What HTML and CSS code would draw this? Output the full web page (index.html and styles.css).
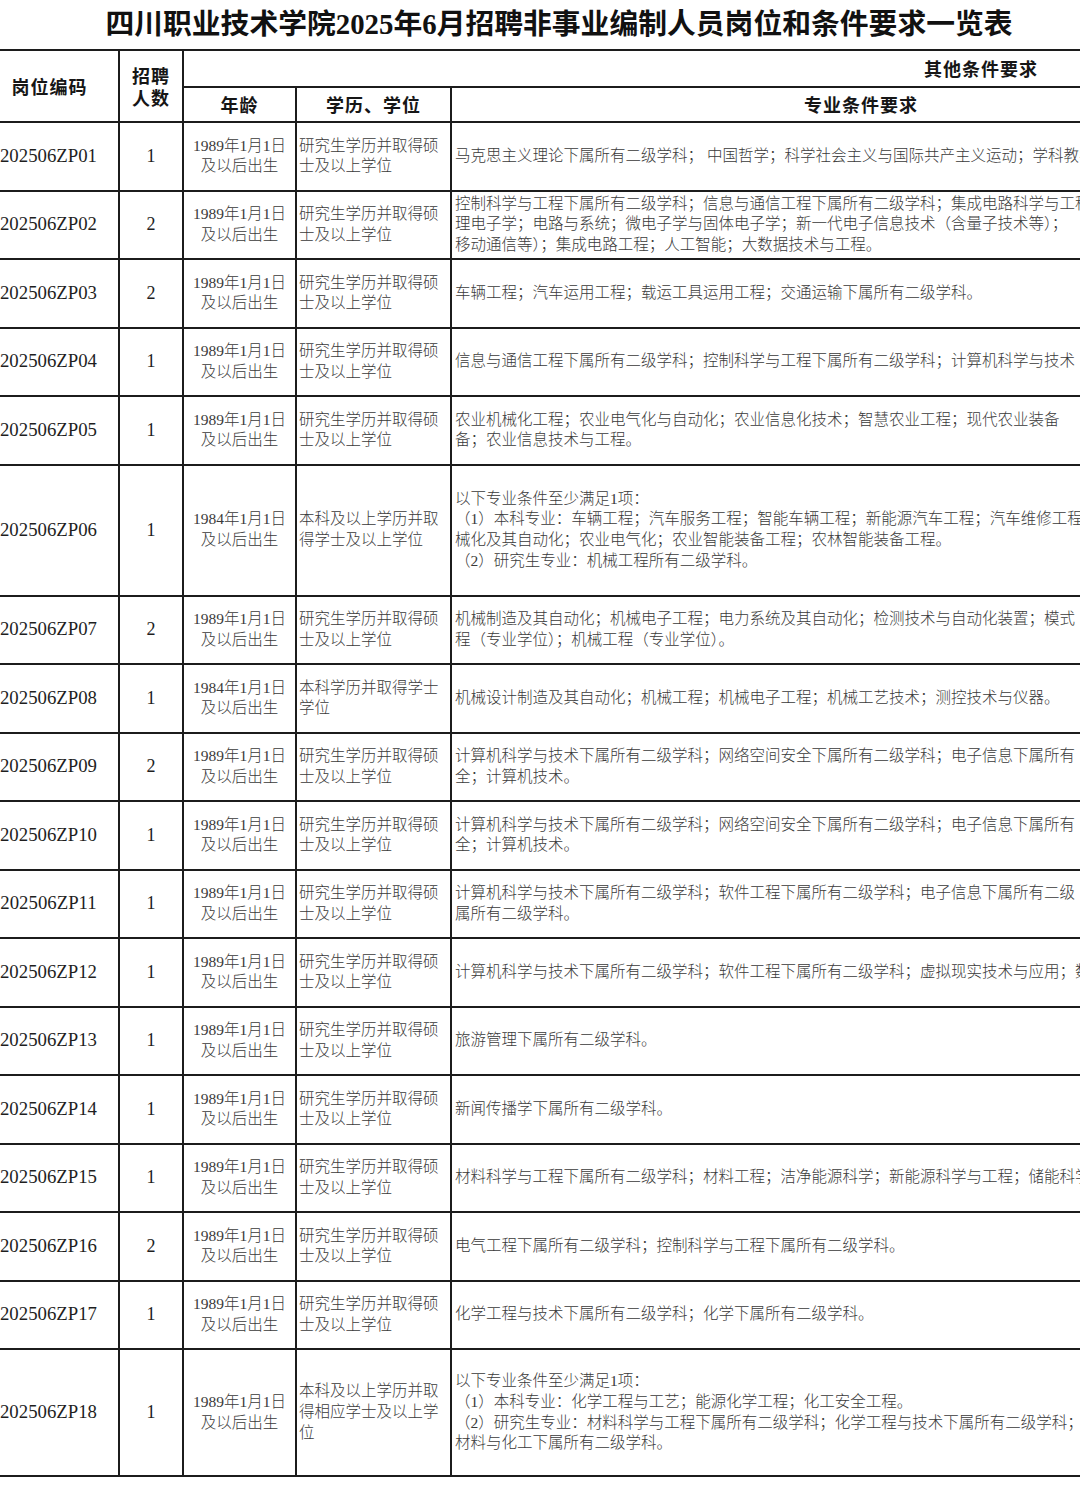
FILE: index.html
```html
<!DOCTYPE html>
<html lang="zh-CN">
<head>
<meta charset="utf-8">
<title>四川职业技术学院2025年6月招聘非事业编制人员岗位和条件要求一览表</title>
<link rel="stylesheet" href="styles.css">
</head>
<body>
<div class="page">
  <h1 class="title">四川职业技术学院<span class="num">2025</span>年<span class="num">6</span>月招聘非事业编制人员岗位和条件要求一览表</h1>
  <div class="sheet">
    <table class="grid">
      <colgroup>
        <col class="c-code"><col class="c-cnt"><col class="c-age"><col class="c-edu"><col class="c-major"><col class="c-other">
      </colgroup>
      <thead>
        <tr class="hd1">
          <th rowspan="2" class="h-code">岗位编码</th>
          <th rowspan="2" class="h-cnt"><div class="hl">招聘</div><div class="hl">人数</div></th>
          <th colspan="4" class="h-other">其他条件要求</th>
        </tr>
        <tr class="hd2">
          <th>年龄</th>
          <th>学历、学位</th>
          <th>专业条件要求</th>
          <th></th>
        </tr>
      </thead>
      <tbody>
        <tr class="r"><td class="code">202506ZP01</td><td class="cnt">1</td><td class="age">1989年1月1日<br>及以后出生</td><td class="edu">研究生学历并取得硕<br>士及以上学位</td><td class="major">马克思主义理论下属所有二级学科； 中国哲学；科学社会主义与国际共产主义运动；学科教学（思政）</td><td></td></tr>
        <tr class="r"><td class="code">202506ZP02</td><td class="cnt">2</td><td class="age">1989年1月1日<br>及以后出生</td><td class="edu">研究生学历并取得硕<br>士及以上学位</td><td class="major">控制科学与工程下属所有二级学科；信息与通信工程下属所有二级学科；集成电路科学与工程<br>理电子学；电路与系统；微电子学与固体电子学；新一代电子信息技术（含量子技术等）；<br>移动通信等）；集成电路工程；人工智能；大数据技术与工程。</td><td></td></tr>
        <tr class="r"><td class="code">202506ZP03</td><td class="cnt">2</td><td class="age">1989年1月1日<br>及以后出生</td><td class="edu">研究生学历并取得硕<br>士及以上学位</td><td class="major">车辆工程；汽车运用工程；载运工具运用工程；交通运输下属所有二级学科。</td><td></td></tr>
        <tr class="r"><td class="code">202506ZP04</td><td class="cnt">1</td><td class="age">1989年1月1日<br>及以后出生</td><td class="edu">研究生学历并取得硕<br>士及以上学位</td><td class="major">信息与通信工程下属所有二级学科；控制科学与工程下属所有二级学科；计算机科学与技术</td><td></td></tr>
        <tr class="r"><td class="code">202506ZP05</td><td class="cnt">1</td><td class="age">1989年1月1日<br>及以后出生</td><td class="edu">研究生学历并取得硕<br>士及以上学位</td><td class="major">农业机械化工程；农业电气化与自动化；农业信息化技术；智慧农业工程；现代农业装备<br>备；农业信息技术与工程。</td><td></td></tr>
        <tr class="tall1"><td class="code">202506ZP06</td><td class="cnt">1</td><td class="age">1984年1月1日<br>及以后出生</td><td class="edu">本科及以上学历并取<br>得学士及以上学位</td><td class="major">以下专业条件至少满足1项：<br>（1）本科专业：车辆工程；汽车服务工程；智能车辆工程；新能源汽车工程；汽车维修工程<br>械化及其自动化；农业电气化；农业智能装备工程；农林智能装备工程。<br>（2）研究生专业：机械工程所有二级学科。</td><td></td></tr>
        <tr class="r"><td class="code">202506ZP07</td><td class="cnt">2</td><td class="age">1989年1月1日<br>及以后出生</td><td class="edu">研究生学历并取得硕<br>士及以上学位</td><td class="major">机械制造及其自动化；机械电子工程；电力系统及其自动化；检测技术与自动化装置；模式<br>程（专业学位）；机械工程（专业学位）。</td><td></td></tr>
        <tr class="r"><td class="code">202506ZP08</td><td class="cnt">1</td><td class="age">1984年1月1日<br>及以后出生</td><td class="edu">本科学历并取得学士<br>学位</td><td class="major">机械设计制造及其自动化；机械工程；机械电子工程；机械工艺技术；测控技术与仪器。</td><td></td></tr>
        <tr class="r"><td class="code">202506ZP09</td><td class="cnt">2</td><td class="age">1989年1月1日<br>及以后出生</td><td class="edu">研究生学历并取得硕<br>士及以上学位</td><td class="major">计算机科学与技术下属所有二级学科；网络空间安全下属所有二级学科；电子信息下属所有<br>全；计算机技术。</td><td></td></tr>
        <tr class="r"><td class="code">202506ZP10</td><td class="cnt">1</td><td class="age">1989年1月1日<br>及以后出生</td><td class="edu">研究生学历并取得硕<br>士及以上学位</td><td class="major">计算机科学与技术下属所有二级学科；网络空间安全下属所有二级学科；电子信息下属所有<br>全；计算机技术。</td><td></td></tr>
        <tr class="r"><td class="code">202506ZP11</td><td class="cnt">1</td><td class="age">1989年1月1日<br>及以后出生</td><td class="edu">研究生学历并取得硕<br>士及以上学位</td><td class="major">计算机科学与技术下属所有二级学科；软件工程下属所有二级学科；电子信息下属所有二级<br>属所有二级学科。</td><td></td></tr>
        <tr class="r"><td class="code">202506ZP12</td><td class="cnt">1</td><td class="age">1989年1月1日<br>及以后出生</td><td class="edu">研究生学历并取得硕<br>士及以上学位</td><td class="major">计算机科学与技术下属所有二级学科；软件工程下属所有二级学科；虚拟现实技术与应用；数字</td><td></td></tr>
        <tr class="r"><td class="code">202506ZP13</td><td class="cnt">1</td><td class="age">1989年1月1日<br>及以后出生</td><td class="edu">研究生学历并取得硕<br>士及以上学位</td><td class="major">旅游管理下属所有二级学科。</td><td></td></tr>
        <tr class="r"><td class="code">202506ZP14</td><td class="cnt">1</td><td class="age">1989年1月1日<br>及以后出生</td><td class="edu">研究生学历并取得硕<br>士及以上学位</td><td class="major">新闻传播学下属所有二级学科。</td><td></td></tr>
        <tr class="r"><td class="code">202506ZP15</td><td class="cnt">1</td><td class="age">1989年1月1日<br>及以后出生</td><td class="edu">研究生学历并取得硕<br>士及以上学位</td><td class="major">材料科学与工程下属所有二级学科；材料工程；洁净能源科学；新能源科学与工程；储能科学</td><td></td></tr>
        <tr class="r"><td class="code">202506ZP16</td><td class="cnt">2</td><td class="age">1989年1月1日<br>及以后出生</td><td class="edu">研究生学历并取得硕<br>士及以上学位</td><td class="major">电气工程下属所有二级学科；控制科学与工程下属所有二级学科。</td><td></td></tr>
        <tr class="r"><td class="code">202506ZP17</td><td class="cnt">1</td><td class="age">1989年1月1日<br>及以后出生</td><td class="edu">研究生学历并取得硕<br>士及以上学位</td><td class="major">化学工程与技术下属所有二级学科；化学下属所有二级学科。</td><td></td></tr>
        <tr class="tall2"><td class="code">202506ZP18</td><td class="cnt">1</td><td class="age">1989年1月1日<br>及以后出生</td><td class="edu">本科及以上学历并取<br>得相应学士及以上学<br>位</td><td class="major">以下专业条件至少满足1项：<br>（1）本科专业：化学工程与工艺；能源化学工程；化工安全工程。<br>（2）研究生专业：材料科学与工程下属所有二级学科；化学工程与技术下属所有二级学科；<br>材料与化工下属所有二级学科。</td><td></td></tr>
      </tbody>
    </table>
  </div>
</div>
</body>
</html>
```
FILE: styles.css
```css
html, body {
  margin: 0;
  padding: 0;
  background: #ffffff;
}

.page {
  width: 1080px;
  height: 1485px;
  overflow: hidden;
  background: #ffffff;
}

.title {
  margin: 0;
  height: 49px;
  line-height: 44px;
  padding-left: 38px;
  text-align: center;
  font-family: "Noto Sans CJK SC", sans-serif;
  font-weight: 700;
  font-size: 28.8px;
  color: #111;
  white-space: nowrap;
}

.title .num {
  font-family: "Liberation Serif", serif;
  font-weight: 700;
}

.sheet {
  margin-left: -23px;
}

.grid {
  border-collapse: collapse;
  table-layout: fixed;
  width: 1803px;
}

.c-code { width: 141px; }
.c-cnt { width: 64px; }
.c-age { width: 113px; }
.c-edu { width: 155px; }
.c-major { width: 820px; }
.c-other { width: 510px; }

.grid th,
.grid td {
  border: 2px solid #1c1c1c;
  padding: 0 2px;
  vertical-align: middle;
  overflow: hidden;
  white-space: nowrap;
}

.grid th {
  font-family: "Noto Sans CJK SC", sans-serif;
  font-weight: 700;
  font-size: 18px;
  letter-spacing: 1px;
  color: #161616;
  text-align: center;
  line-height: 23px;
}

.grid th.h-code {
  padding-left: 4px;
}

.grid th.h-cnt .hl {
  line-height: 22px;
  height: 22px;
}

.grid th.h-other {
  padding-left: 0;
}

.hd1 { height: 37px; }
.hd2 { height: 35px; }
.r { height: 68.5px; }
.tall1 { height: 131px; }
.tall2 { height: 127px; }

.grid td {
  font-family: "Liberation Serif", "Noto Sans CJK SC", serif;
  font-weight: 300;
  font-size: 15.5px;
  line-height: 20.7px;
  color: #3a3a3a;
}

.grid td.code {
  text-align: center;
  font-weight: 400;
  font-size: 18.8px;
  color: #1e1e1e;
}

.grid td.cnt {
  text-align: center;
  font-weight: 400;
  font-size: 18px;
  color: #1e1e1e;
}

.grid td.age {
  text-align: center;
  padding: 0;
}

.grid td.edu {
  text-align: left;
  padding-left: 2px;
}

.grid td.major {
  text-align: left;
  padding-left: 3px;
}
```
